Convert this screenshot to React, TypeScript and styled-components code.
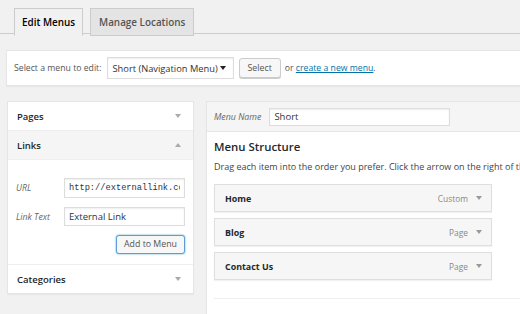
import React from 'react';
import styled, { createGlobalStyle } from 'styled-components';

const GlobalStyle = createGlobalStyle`
  html, body {
    margin: 0;
    padding: 0;
    background: #f1f1f1;
    font-family: "Open Sans", "Liberation Sans", sans-serif;
    font-size: 9px;
    color: #444;
    overflow: hidden;
  }
`;

const Page = styled.div`
  width: 520px;
  height: 314px;
  overflow: hidden;
  box-sizing: border-box;
`;

const TabBar = styled.div`
  display: flex;
  gap: 7px;
  padding: 8px 0 0 14px;
  height: 34px;
  box-sizing: border-box;
  border-bottom: 1px solid #ccc;
`;

const Tab = styled.div<{ $active?: boolean }>`
  display: flex;
  align-items: center;
  padding: 0 ${p => (p.$active ? 7 : 8)}px 1px;
  height: 25px;
  margin-bottom: -1px;
  border: 1px solid #ccc;
  border-bottom-color: ${p => (p.$active ? '#f1f1f1' : '#ccc')};
  background: ${p => (p.$active ? '#f1f1f1' : '#e4e4e4')};
  color: ${p => (p.$active ? '#000' : '#555')};
  font-size: 9.9px;
  font-weight: 600;
  box-sizing: content-box;
`;

const SelectBar = styled.div`
  margin: 16px 0 0 6px;
  height: 34px;
  background: #fff;
  border: 1px solid #e5e5e5;
  border-right: none;
  box-shadow: 0 1px 1px rgba(0, 0, 0, 0.04);
  display: flex;
  align-items: center;
  padding-left: 7px;
  gap: 4px;
  font-size: 8.7px;
  color: #555;
`;

const FakeSelect = styled.div`
  display: flex;
  align-items: center;
  justify-content: space-between;
  width: 127px;
  height: 22px;
  margin-left: 1px;
  padding: 0 7px 0 5px;
  box-sizing: border-box;
  border: 1px solid #ddd;
  background: #fff;
  color: #333;
  font-size: 9.3px;
  box-shadow: inset 0 1px 2px rgba(0, 0, 0, 0.07);
`;

const Caret = styled.span<{ $color?: string }>`
  display: inline-block;
  width: 0;
  height: 0;
  border-left: 3px solid transparent;
  border-right: 3px solid transparent;
  border-top: 4px solid ${p => p.$color ?? '#222'};
`;

const CaretUp = styled.span`
  display: inline-block;
  width: 0;
  height: 0;
  border-left: 3px solid transparent;
  border-right: 3px solid transparent;
  border-bottom: 4px solid #aaa;
`;

const Button = styled.button<{ $focus?: boolean }>`
  height: ${p => (p.$focus ? 19 : 20)}px;
  padding: 0 ${p => (p.$focus ? 7 : 8)}px;
  margin-left: ${p => (p.$focus ? 0 : 1)}px;
  border: 1px solid ${p => (p.$focus ? '#5b9dd9' : '#ccc')};
  border-radius: 3px;
  background: #f7f7f7;
  box-shadow: ${p => (p.$focus ? '0 0 2px rgba(30,140,190,0.8)' : '0 1px 0 #ccc')};
  color: #555;
  font-family: "Open Sans", "Liberation Sans", sans-serif;
  font-size: 8.8px;
  line-height: 1;
  cursor: pointer;
`;

const Link = styled.a`
  color: #0073aa;
  text-decoration: underline;
`;

const Columns = styled.div`
  display: flex;
  align-items: flex-start;
  margin-top: 15px;
  padding-left: 7px;
  gap: 12px;
`;

const Sidebar = styled.div`
  width: 187px;
  flex-shrink: 0;
  background: #fff;
  border: 1px solid #e5e5e5;
  box-shadow: 0 1px 1px rgba(0, 0, 0, 0.04);
  box-sizing: border-box;
`;

const SectionHeader = styled.div<{ $open?: boolean }>`
  display: flex;
  align-items: center;
  justify-content: space-between;
  height: 28px;
  padding: 0 12px 0 9px;
  font-size: 9.5px;
  font-weight: 600;
  color: #23282d;
  background: ${p => (p.$open ? '#f5f5f5' : '#fff')};
  border-top: 1px solid #eee;
  &:first-child {
    border-top: none;
  }
`;

const SectionBody = styled.div`
  border-top: 1px solid #eee;
  padding: 18px 8px 10px 8px;
  display: flex;
  flex-direction: column;
  gap: 9px;
`;

const FieldRow = styled.div`
  display: flex;
  align-items: center;
  justify-content: space-between;
`;

const Label = styled.label`
  font-style: italic;
  font-size: 8.8px;
  color: #666;
`;

const Input = styled.input<{ $mono?: boolean; $width: number; $height?: number }>`
  width: ${p => p.$width}px;
  height: ${p => p.$height ?? 20}px;
  box-sizing: border-box;
  border: 1px solid #ddd;
  box-shadow: inset 0 1px 2px rgba(0, 0, 0, 0.07);
  padding: 0 4px;
  font-family: ${p => (p.$mono ? '"Liberation Mono", monospace' : '"Open Sans", "Liberation Sans", sans-serif')};
  font-size: ${p => (p.$mono ? 8.7 : 9.5)}px;
  color: #333;
  background: #fff;
  outline: none;
`;

const ButtonRow = styled.div`
  display: flex;
  justify-content: flex-end;
`;

const MainPanel = styled.div`
  flex: 1;
  min-width: 330px;
  background: #fff;
  border: 1px solid #e5e5e5;
  border-right: none;
  box-shadow: 0 1px 1px rgba(0, 0, 0, 0.04);
`;

const MainHeader = styled.div`
  display: flex;
  align-items: center;
  gap: 8px;
  height: 29px;
  padding-left: 7px;
  background: #f5f5f5;
  border-bottom: 1px solid #e5e5e5;
`;

const MainBody = styled.div`
  padding: 7px 0 0 7px;
`;

const Heading = styled.h3`
  margin: 0;
  font-size: 11.4px;
  font-weight: 600;
  color: #23282d;
  line-height: 16px;
`;

const Description = styled.p`
  margin: 5px 0 0;
  font-size: 9px;
  color: #444;
  white-space: nowrap;
  line-height: 13px;
`;

const ItemList = styled.div`
  display: flex;
  flex-direction: column;
  gap: 6px;
  margin-top: 11px;
  width: 278px;
`;

const Item = styled.div`
  display: flex;
  align-items: center;
  justify-content: space-between;
  height: 28px;
  box-sizing: border-box;
  padding: 0 9px 0 10px;
  border: 1px solid #dfdfdf;
  background: #f6f6f6;
  box-shadow: 0 1px 1px rgba(0, 0, 0, 0.05);
`;

const ItemTitle = styled.span`
  font-size: 8.9px;
  font-weight: 700;
  color: #23282d;
`;

const ItemMeta = styled.span`
  display: flex;
  align-items: center;
  gap: 8px;
  font-size: 8.4px;
  color: #888;
`;

const Separator = styled.div`
  margin-top: 18px;
  border-top: 1px solid #eee;
  padding-top: 11px;
`;

const items = [
  { title: 'Home', type: 'Custom' },
  { title: 'Blog', type: 'Page' },
  { title: 'Contact Us', type: 'Page' },
];

export default function App() {
  return (
    <Page>
      <GlobalStyle />
      <TabBar>
        <Tab $active>Edit Menus</Tab>
        <Tab>Manage Locations</Tab>
      </TabBar>

      <SelectBar>
        <span>Select a menu to edit:</span>
        <FakeSelect>
          <span>Short (Navigation Menu)</span>
          <Caret />
        </FakeSelect>
        <Button>Select</Button>
        <span>
          or <Link>create a new menu</Link>.
        </span>
      </SelectBar>

      <Columns>
        <Sidebar>
          <SectionHeader>
            Pages <Caret $color="#aaa" />
          </SectionHeader>
          <SectionHeader $open>
            Links <CaretUp />
          </SectionHeader>
          <SectionBody>
            <FieldRow>
              <Label>URL</Label>
              <Input $mono $width={121} defaultValue="http://externallink.com" />
            </FieldRow>
            <FieldRow>
              <Label>Link Text</Label>
              <Input $width={121} $height={19} defaultValue="External Link" />
            </FieldRow>
            <ButtonRow>
              <Button $focus>Add to Menu</Button>
            </ButtonRow>
          </SectionBody>
          <SectionHeader>
            Categories <Caret $color="#aaa" />
          </SectionHeader>
        </Sidebar>

        <MainPanel>
          <MainHeader>
            <Label>Menu Name</Label>
            <Input $width={181} $height={18} defaultValue="Short" />
          </MainHeader>
          <MainBody>
            <Heading>Menu Structure</Heading>
            <Description>
              Drag each item into the order you prefer. Click the arrow on the right of the item to reveal additional configuration options.
            </Description>
            <ItemList>
              {items.map(it => (
                <Item key={it.title}>
                  <ItemTitle>{it.title}</ItemTitle>
                  <ItemMeta>
                    {it.type}
                    <Caret $color="#999" />
                  </ItemMeta>
                </Item>
              ))}
            </ItemList>
            <Separator>
              <Heading>Menu Settings</Heading>
            </Separator>
          </MainBody>
        </MainPanel>
      </Columns>
    </Page>
  );
}
